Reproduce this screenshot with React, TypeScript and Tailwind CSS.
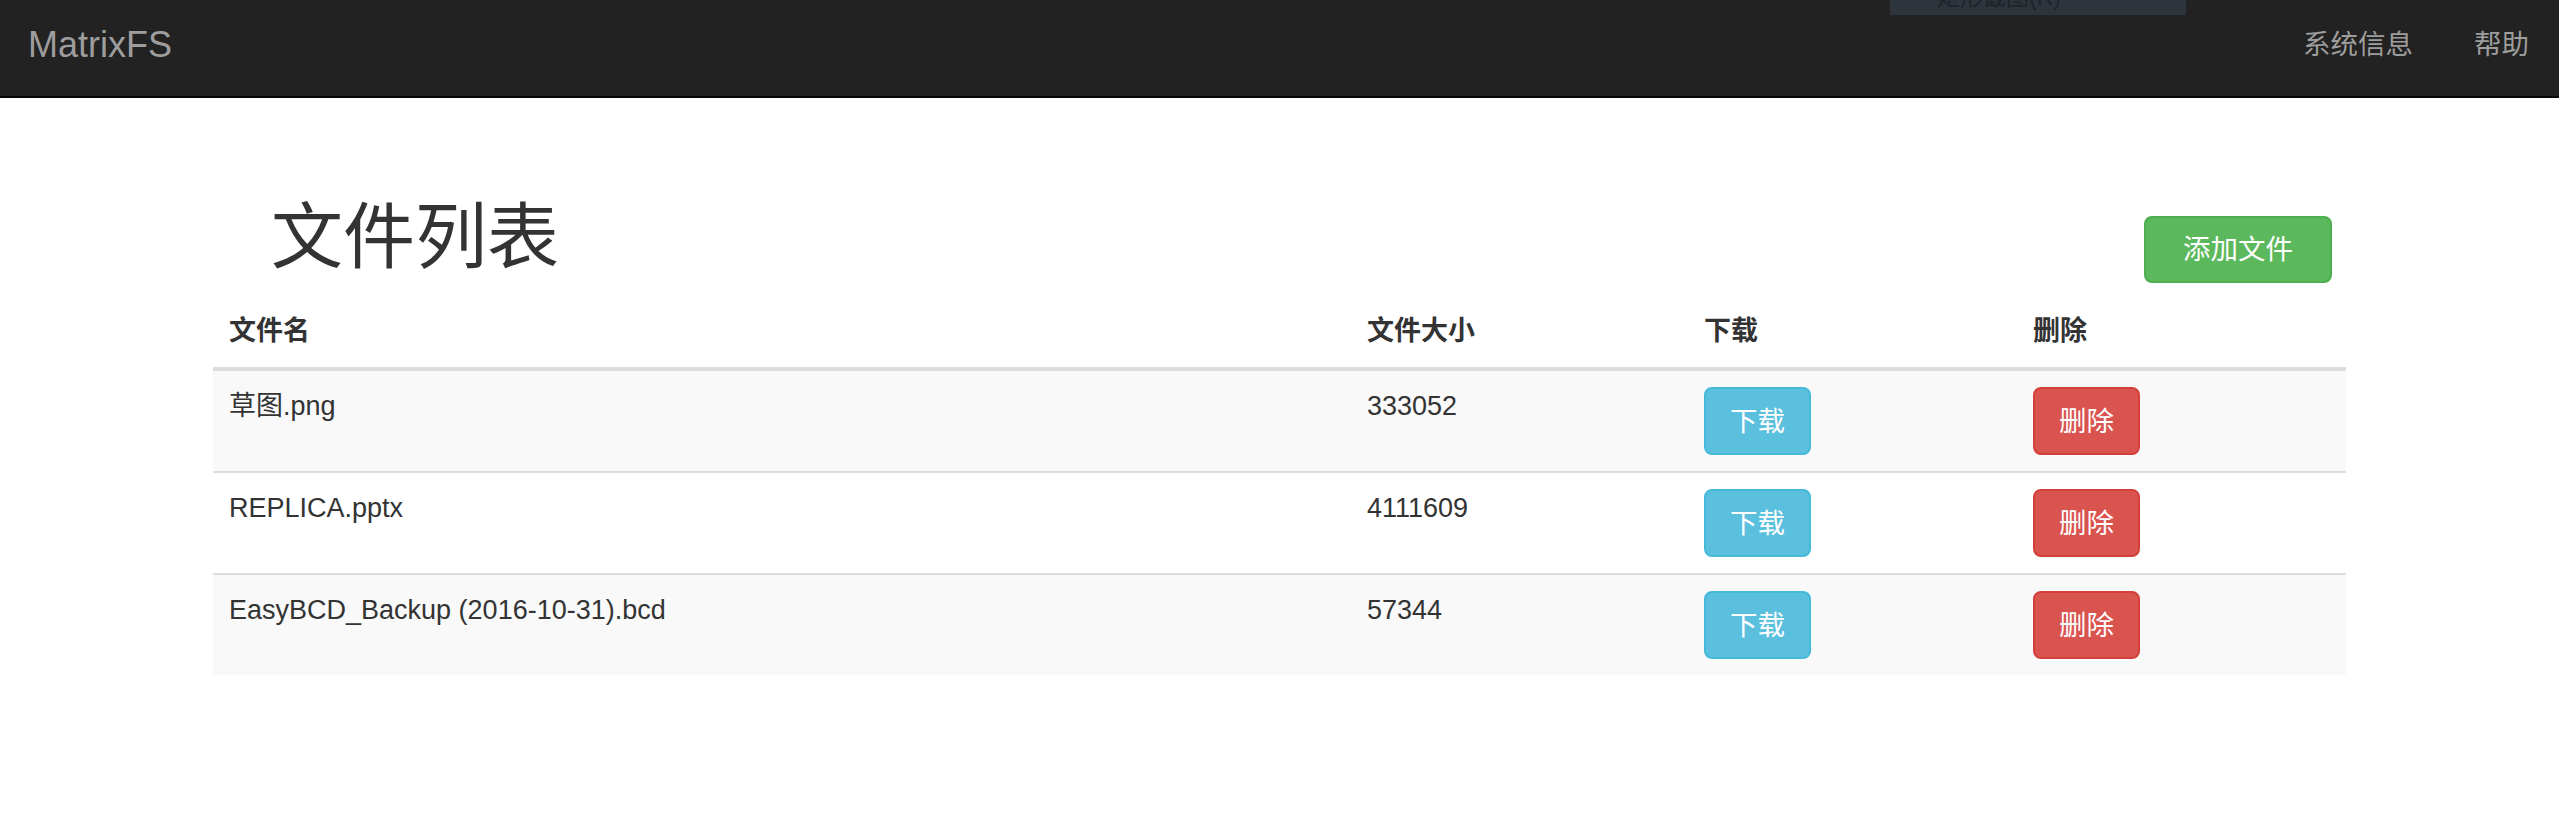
import React from "react";

const rows = [
  { name: "草图.png", size: "333052" },
  { name: "REPLICA.pptx", size: "4111609" },
  { name: "EasyBCD_Backup (2016-10-31).bcd", size: "57344" },
];

export default function App() {
  return (
    <div className="relative min-h-[833px] bg-white font-['Liberation_Sans','Noto_Sans_CJK_SC',sans-serif] text-[#333]">
      {/* navbar */}
      <nav className="flex h-[98px] items-center justify-between border-b-2 border-[#080808] bg-[#222] pb-[6px]">
        <div className="pl-[28px] text-[36px] leading-[40px] text-[#9d9d9d]">MatrixFS</div>
        <div className="flex items-center gap-[61px] pr-[30px] text-[27.5px] leading-[40px] text-[#9d9d9d]">
          <span>系统信息</span>
          <span>帮助</span>
        </div>
      </nav>

      {/* leftover context menu from screenshot tool */}
      <div className="absolute left-[1890px] top-0 h-[15px] w-[296px] overflow-hidden bg-[#2d343c]">
        <div className="-mt-[14px] pl-[47px] text-[23px] leading-[23px] text-[#1e2329] whitespace-nowrap">
          矩形截图(R)
        </div>
      </div>

      <main className="mx-auto w-[2133px]">
        <div className="flex h-[178px] items-start justify-between pt-[100px]">
          <h1 className="pl-[58px] text-[72px] font-normal leading-[78px] text-[#333]">文件列表</h1>
          <button className="mr-[14px] mt-[18px] h-[67px] w-[188px] rounded-[8px] border-2 border-[#4cae4c] bg-[#5cb85c] text-[27.5px] leading-[39px] text-white">
            添加文件
          </button>
        </div>

        <table className="mt-[20px] w-full table-fixed border-separate border-spacing-0 text-left text-[27px]">
          <thead>
            <tr>
              <th className="w-[1138px] border-b-4 border-[#ddd] px-[16px] py-[16px] font-bold leading-[39px]">文件名</th>
              <th className="w-[337px] border-b-4 border-[#ddd] px-[16px] py-[16px] font-bold leading-[39px]">文件大小</th>
              <th className="w-[329px] border-b-4 border-[#ddd] px-[16px] py-[16px] font-bold leading-[39px]">下载</th>
              <th className="w-[329px] border-b-4 border-[#ddd] px-[16px] py-[16px] font-bold leading-[39px]">删除</th>
            </tr>
          </thead>
          <tbody>
            {rows.map((r, i) => {
              const bg = i % 2 === 0 ? "bg-[#f9f9f9]" : "bg-white";
              const bt = i === 0 ? "border-t-0" : "border-t-2 border-[#ddd]";
              return (
                <tr key={r.name} className={bg}>
                  <td className={`${bt} h-[100px] px-[16px] py-[16px] align-top leading-[39px]`}>{r.name}</td>
                  <td className={`${bt} px-[16px] py-[16px] align-top leading-[39px]`}>{r.size}</td>
                  <td className={`${bt} px-[16px] py-[16px] align-top`}>
                    <button className="block h-[68px] w-[107px] rounded-[8px] border-2 border-[#46b8da] bg-[#5bc0de] text-[27.5px] leading-[39px] text-white">
                      下载
                    </button>
                  </td>
                  <td className={`${bt} px-[16px] py-[16px] align-top`}>
                    <button className="block h-[68px] w-[107px] rounded-[8px] border-2 border-[#d43f3a] bg-[#d9534f] text-[27.5px] leading-[39px] text-white">
                      删除
                    </button>
                  </td>
                </tr>
              );
            })}
          </tbody>
        </table>
      </main>
    </div>
  );
}
